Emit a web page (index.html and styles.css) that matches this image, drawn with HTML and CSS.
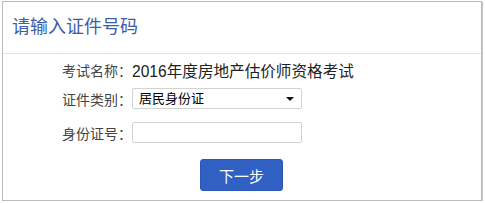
FILE: index.html
```html
<!DOCTYPE html>
<html lang="zh-CN">
<head>
  <meta charset="UTF-8" />
  <meta name="viewport" content="width=device-width, initial-scale=1.0"/>
  <title>请输入证件号码</title>
  <link rel="stylesheet" href="styles.css">
</head>
<body>

<div class="panel">
  <div class="panel-head">请输入证件号码</div>

  <div class="panel-body">
    <div class="row row-exam">
      <label>考试名称：</label>
      <span class="exam-name">2016年度房地产估价师资格考试</span>
    </div>

    <div class="row row-type">
      <label for="cert-type">证件类别：</label>
      <div class="select-wrap">
        <select id="cert-type">
          <option>居民身份证</option>
          <option>护照</option>
          <option>军官证</option>
        </select>
      </div>
    </div>

    <div class="row row-id">
      <label for="cert-no">身份证号：</label>
      <input type="text" id="cert-no" />
    </div>

    <div class="actions">
      <button type="button">下一步</button>
    </div>
  </div>
</div>

</body>
</html>
```

FILE: styles.css
```css
body {
  margin: 0;
  font-family: "Liberation Sans", "Noto Sans CJK SC", sans-serif;
  background: #fff;
}
.panel {
  width: 478px;
  height: 198px;
  margin: 1px 0 0 2px;
  border: 1px solid #bcbcbc;
  box-shadow: 1px 1px 0 #c4c4c4;
}
.panel-head {
  height: 51px;
  line-height: 50px;
  padding-left: 9px;
  font-size: 18px;
  color: #3b5ea6;
  border-bottom: 1px solid #e2e2e2;
}
.row {
  display: flex;
  align-items: center;
  height: 21px;
}
.row label {
  width: 129px;
  text-align: right;
  font-size: 14px;
  color: #444;
}
.row-exam {
  margin-top: 4px;
  height: 24px;
}
.row-type {
  margin-top: 6px;
}
.row-id {
  margin-top: 13px;
}
.exam-name {
  font-size: 15.6px;
  color: #222;
}
.select-wrap {
  position: relative;
  width: 170px;
  height: 21px;
}
.select-wrap::after {
  content: "";
  position: absolute;
  right: 8px;
  top: 9px;
  border-left: 4px solid transparent;
  border-right: 4px solid transparent;
  border-top: 4px solid #111;
  pointer-events: none;
}
select {
  appearance: none;
  -webkit-appearance: none;
  width: 170px;
  height: 21px;
  padding: 0 0 0 6px;
  border: 1px solid #d2d2d2;
  border-radius: 2px;
  background: #fff;
  font-family: "Liberation Sans", "Noto Sans CJK SC", sans-serif;
  font-size: 13px;
  color: #000;
}
input {
  width: 170px;
  height: 21px;
  box-sizing: border-box;
  margin: 0;
  border: 1px solid #d2d2d2;
  border-radius: 2px;
  padding: 0 6px;
}
.actions {
  margin-top: 16px;
  padding-left: 197px;
}
button {
  width: 83px;
  height: 32px;
  border: 1px solid #2a57b8;
  border-radius: 3px;
  background: #2f60c2;
  color: #fff;
  font-family: "Liberation Sans", "Noto Sans CJK SC", sans-serif;
  font-size: 15px;
  cursor: pointer;
}
button:hover {
  background: #2552ad;
}
```
